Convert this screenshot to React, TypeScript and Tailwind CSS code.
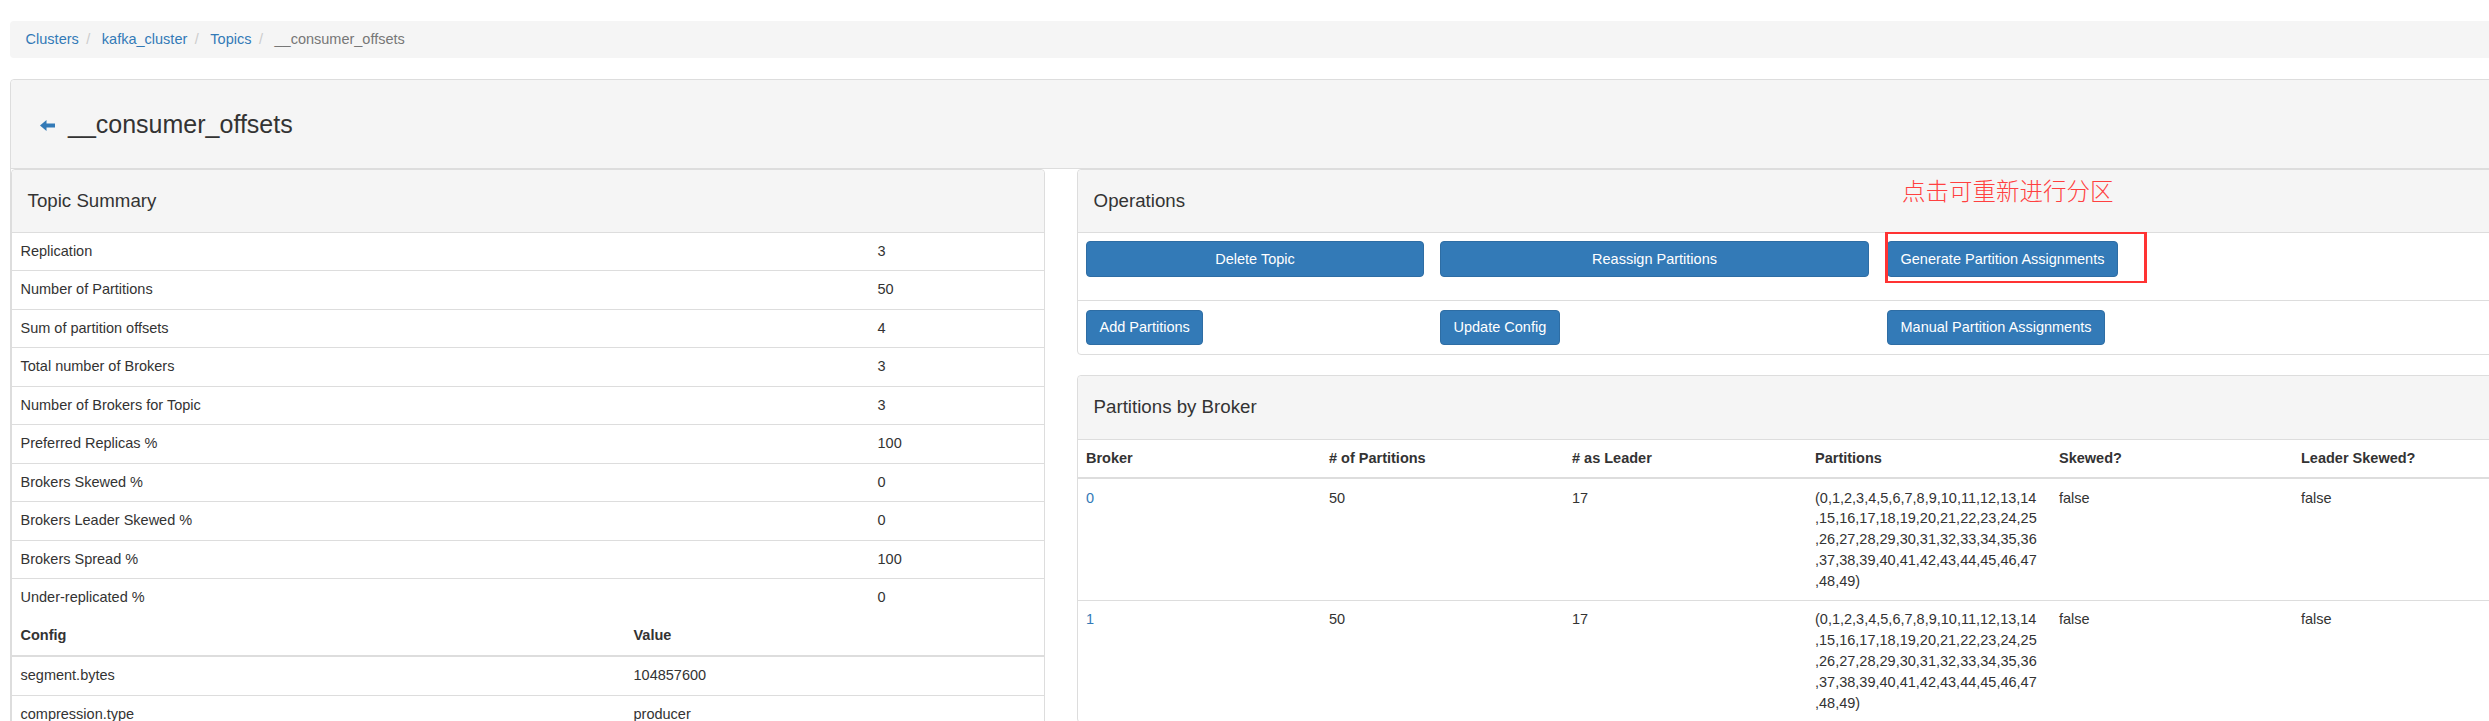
import React from "react";

const summary: [string, string][] = [
  ["Replication", "3"],
  ["Number of Partitions", "50"],
  ["Sum of partition offsets", "4"],
  ["Total number of Brokers", "3"],
  ["Number of Brokers for Topic", "3"],
  ["Preferred Replicas %", "100"],
  ["Brokers Skewed %", "0"],
  ["Brokers Leader Skewed %", "0"],
  ["Brokers Spread %", "100"],
  ["Under-replicated %", "0"],
];

const config: [string, string][] = [
  ["segment.bytes", "104857600"],
  ["compression.type", "producer"],
];

const partLines = [
  "(0,1,2,3,4,5,6,7,8,9,10,11,12,13,14",
  ",15,16,17,18,19,20,21,22,23,24,25",
  ",26,27,28,29,30,31,32,33,34,35,36",
  ",37,38,39,40,41,42,43,44,45,46,47",
  ",48,49)",
];

function ArrowLeft() {
  return (
    <svg width="15" height="11" viewBox="0 0 15 11" className="block">
      <path d="M0 5.5 L6.5 0 V3.5 H15 V7.5 H6.5 V11 Z" fill="#337ab7" />
    </svg>
  );
}

function Btn({ children, className = "" }: { children: React.ReactNode; className?: string }) {
  return (
    <button
      className={
        "bg-[#337ab7] border border-[#2e6da4] rounded-[4px] text-white text-[14.5px] px-[12.5px] flex items-center justify-center whitespace-nowrap " +
        className
      }
    >
      {children}
    </button>
  );
}

export default function App() {
  return (
    <div className="relative w-[2489px] h-[721px] overflow-hidden bg-white text-[#333] text-[14.5px] leading-[20.8px] font-['Liberation_Sans',Arial,sans-serif]">
      <div className="w-[3200px] pl-[10px] pt-[21px]">
        {/* breadcrumb */}
        <nav className="h-[37px] bg-[#f5f5f5] rounded-[4px] px-[15.6px] flex items-center gap-[3px]">
          <span className="text-[#337ab7]">Clusters</span>
          <span className="px-[4.5px] text-[#ccc]">/&nbsp;</span>
          <span className="text-[#337ab7]">kafka_cluster</span>
          <span className="px-[4.5px] text-[#ccc]">/&nbsp;</span>
          <span className="text-[#337ab7]">Topics</span>
          <span className="px-[4.5px] text-[#ccc]">/&nbsp;</span>
          <span className="text-[#777]">__consumer_offsets</span>
        </nav>

        {/* outer panel */}
        <div className="mt-[21px] border border-[#ddd] rounded-[4px]">
          <div className="h-[89px] bg-[#f5f5f5] border-b border-[#ddd] rounded-t-[4px] flex items-center">
            <div className="ml-[29px] mt-[2px]">
              <ArrowLeft />
            </div>
            <h3 className="ml-[13px] text-[25px] leading-[27px] font-normal">__consumer_offsets</h3>
          </div>

          <div className="flex items-start gap-[32px]">
            {/* left panel */}
            <div className="w-[1034px] border border-[#ddd] rounded-[4px]">
              <div className="h-[63px] bg-[#f5f5f5] border-b border-[#ddd] rounded-t-[4px] flex items-center px-[15.6px]">
                <h4 className="text-[18.7px] font-normal">Topic Summary</h4>
              </div>
              <div>
                {summary.map(([k, v], i) => (
                  <div
                    key={k}
                    className={
                      "flex items-center " + (i === 0 ? "h-[37px]" : "h-[38.5px] border-t border-[#ddd]")
                    }
                  >
                    <div className="w-[857px] px-[8.5px]">{k}</div>
                    <div className="px-[8.5px]">{v}</div>
                  </div>
                ))}
                <div className="h-[40px] flex items-center border-b-2 border-[#ddd] font-bold">
                  <div className="w-[613px] px-[8.5px]">Config</div>
                  <div className="px-[8.5px]">Value</div>
                </div>
                {config.map(([k, v], i) => (
                  <div
                    key={k}
                    className={"flex items-center " + (i === 0 ? "h-[38px]" : "h-[38.5px] border-t border-[#ddd]")}
                  >
                    <div className="w-[613px] px-[8.5px]">{k}</div>
                    <div className="px-[8.5px]">{v}</div>
                  </div>
                ))}
              </div>
            </div>

            {/* right column */}
            <div className="flex-1">
              {/* operations */}
              <div className="border border-[#ddd] rounded-[4px]">
                <div className="h-[63px] bg-[#f5f5f5] border-b border-[#ddd] rounded-t-[4px] flex items-center px-[15.6px]">
                  <h4 className="text-[18.7px] font-normal">Operations</h4>
                </div>
                <div className="grid grid-cols-[354px_447px_1fr] h-[67px]">
                  <div className="px-[8px] pt-[8px]">
                    <Btn className="w-full h-[36px]">Delete Topic</Btn>
                  </div>
                  <div className="px-[8px] pt-[8px]">
                    <Btn className="w-[429px] h-[36px]">Reassign Partitions</Btn>
                  </div>
                  <div className="px-[8px] pt-[8px]">
                    <Btn className="h-[36px]">Generate Partition Assignments</Btn>
                  </div>
                </div>
                <div className="grid grid-cols-[354px_447px_1fr] h-[54px] border-t border-[#ddd]">
                  <div className="px-[8px] pt-[9px]">
                    <Btn className="h-[35px]">Add Partitions</Btn>
                  </div>
                  <div className="px-[8px] pt-[9px]">
                    <Btn className="h-[35px]">Update Config</Btn>
                  </div>
                  <div className="px-[8px] pt-[9px]">
                    <Btn className="h-[35px]">Manual Partition Assignments</Btn>
                  </div>
                </div>
              </div>

              {/* partitions by broker */}
              <div className="mt-[20px] border border-[#ddd] rounded-[4px]">
                <div className="h-[64px] bg-[#f5f5f5] border-b border-[#ddd] rounded-t-[4px] flex items-center px-[15.6px]">
                  <h4 className="text-[18.7px] font-normal">Partitions by Broker</h4>
                </div>
                <div className="grid grid-cols-[243px_243px_243px_244px_242px_1fr] h-[39px] items-center border-b-2 border-[#ddd] font-bold">
                  <div className="px-[8px]">Broker</div>
                  <div className="px-[8px]"># of Partitions</div>
                  <div className="px-[8px]"># as Leader</div>
                  <div className="px-[8px]">Partitions</div>
                  <div className="px-[8px]">Skewed?</div>
                  <div className="px-[8px]">Leader Skewed?</div>
                </div>
                {["0", "1"].map((b, i) => (
                  <div
                    key={b}
                    className={
                      "grid grid-cols-[243px_243px_243px_244px_242px_1fr] py-[8.5px] " +
                      (i === 0 ? "" : "border-t border-[#ddd]")
                    }
                  >
                    <div className="px-[8px] text-[#337ab7]">{b}</div>
                    <div className="px-[8px]">50</div>
                    <div className="px-[8px]">17</div>
                    <div className="px-[8px] whitespace-nowrap">
                      {partLines.map((l) => (
                        <div key={l}>{l}</div>
                      ))}
                    </div>
                    <div className="px-[8px]">false</div>
                    <div className="px-[8px]">false</div>
                  </div>
                ))}
              </div>
            </div>
          </div>
        </div>
      </div>

      {/* annotations */}
      <div className="absolute left-[1902px] top-[175px] text-[23.5px] leading-[30px] text-[#ff4040] font-['Noto_Sans_CJK_SC',sans-serif] font-light">
        点击可重新进行分区
      </div>
      <div className="absolute left-[1885px] top-[232px] w-[262px] h-[51px] border-y-2 border-x-[3px] border-[#ff3333]" />
    </div>
  );
}
